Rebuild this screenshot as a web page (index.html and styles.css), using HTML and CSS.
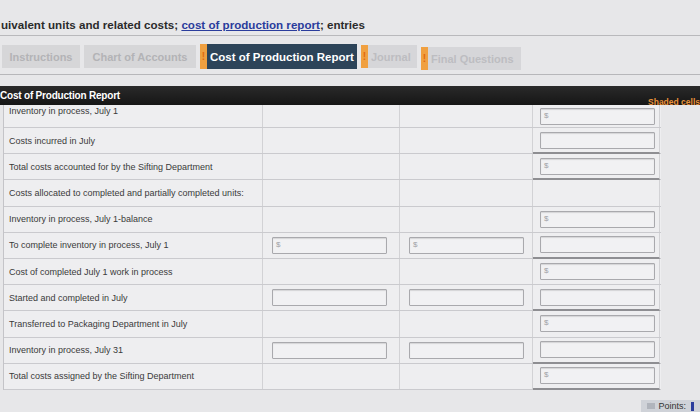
FILE: index.html
```html
<!DOCTYPE html>
<html>
<head>
<meta charset="utf-8">
<link rel="stylesheet" href="styles.css">
</head>
<body>
<div class="page">
  <div class="title">uivalent units and related costs; <a class="link">cost of production report</a>; entries</div>
  <div class="tabs">
    <div class="tab plain w-instr">Instructions</div>
    <div class="tab plain w-chart">Chart of Accounts</div>
    <div class="tab active w-cpr"><span class="flag">!</span><span class="lbl">Cost of Production Report</span></div>
    <div class="tab flagged w-jour"><span class="flag">!</span><span class="lbl">Journal</span></div>
    <div class="tab flagged w-final"><span class="flag">!</span><span class="lbl">Final Questions</span></div>
  </div>
  <div class="header">
    <span class="h-title">Cost of Production Report</span>
    <span class="h-note">Shaded cells</span>
  </div>
  <div class="table">
    <div class="row first">
      <div class="label">Inventory in process, July 1</div><div class="c"></div><div class="c"></div>
      <div class="c last"><div class="inp">$</div></div>
    </div>
    <div class="row">
      <div class="label">Costs incurred in July</div><div class="c"></div><div class="c"></div>
      <div class="c last total"><div class="inp"></div></div>
    </div>
    <div class="row">
      <div class="label">Total costs accounted for by the Sifting Department</div><div class="c"></div><div class="c"></div>
      <div class="c last total"><div class="inp">$</div></div>
    </div>
    <div class="row">
      <div class="label">Costs allocated to completed and partially completed units:</div><div class="c"></div><div class="c"></div>
      <div class="c last"></div>
    </div>
    <div class="row">
      <div class="label">Inventory in process, July 1-balance</div><div class="c"></div><div class="c"></div>
      <div class="c last"><div class="inp">$</div></div>
    </div>
    <div class="row">
      <div class="label">To complete inventory in process, July 1</div>
      <div class="c"><div class="inp">$</div></div><div class="c"><div class="inp">$</div></div>
      <div class="c last total"><div class="inp"></div></div>
    </div>
    <div class="row">
      <div class="label">Cost of completed July 1 work in process</div><div class="c"></div><div class="c"></div>
      <div class="c last"><div class="inp">$</div></div>
    </div>
    <div class="row">
      <div class="label">Started and completed in July</div>
      <div class="c"><div class="inp"></div></div><div class="c"><div class="inp"></div></div>
      <div class="c last total"><div class="inp"></div></div>
    </div>
    <div class="row">
      <div class="label">Transferred to Packaging Department in July</div><div class="c"></div><div class="c"></div>
      <div class="c last"><div class="inp">$</div></div>
    </div>
    <div class="row">
      <div class="label">Inventory in process, July 31</div>
      <div class="c"><div class="inp"></div></div><div class="c"><div class="inp"></div></div>
      <div class="c last total"><div class="inp"></div></div>
    </div>
    <div class="row">
      <div class="label">Total costs assigned by the Sifting Department</div><div class="c"></div><div class="c"></div>
      <div class="c last total"><div class="inp">$</div></div>
    </div>
  </div>
  <div class="footer"><span class="points"><span class="pico"></span>Points:<span class="pbar"></span></span></div>
</div>
</body>
</html>
```
FILE: styles.css
```css
html, body {
  margin: 0;
  padding: 0;
}
body {
  width: 700px;
  height: 412px;
  overflow: hidden;
  background: #e7e7e9;
  font-family: "Liberation Sans", Arial, sans-serif;
  color: #333;
}
.page {
  display: flex;
  flex-direction: column;
}
.title {
  padding: 18px 0 0 1px;
  height: 17px;
  font-size: 11.6px;
  font-weight: bold;
  color: #2b2b2b;
  white-space: nowrap;
  border-bottom: 1px solid #b9b9bc;
}
.link {
  color: #2a3c9c;
  text-decoration: underline;
}
.tabs {
  display: flex;
  gap: 4px;
  padding: 9px 0 0 2px;
  height: 29px;
  border-bottom: 1px solid #b7b7ba;
  box-sizing: content-box;
}
.tab {
  height: 23px;
  display: flex;
  align-items: center;
  font-size: 11px;
  font-weight: bold;
  white-space: nowrap;
}
.plain {
  background: #d6d6d8;
  color: #b3b3b6;
  justify-content: center;
}
.w-instr { width: 78px; }
.w-chart { width: 112px; }
.w-cpr { width: 157px; }
.w-jour { width: 56px; }
.w-final { width: 100px; margin-top: 2px; }
.flag {
  width: 7px;
  height: 100%;
  background: #f0a040;
  color: #e06a10;
  font-size: 10px;
  display: flex;
  align-items: center;
  justify-content: center;
  flex: none;
}
.lbl {
  flex: 1;
  height: 100%;
  display: flex;
  align-items: center;
  padding-left: 3px;
}
.active {
  height: 25px;
  margin-top: -1px;
}
.active .lbl {
  background: #2d4459;
  color: #ffffff;
  font-size: 11.5px;
}
.flagged .lbl {
  background: #d6d6d9;
  color: #bdbdc1;
}
.header {
  margin-top: 11px;
  height: 19px;
  background: linear-gradient(#2a2a2a, #161616);
  display: flex;
  justify-content: space-between;
  white-space: nowrap;
}
.h-title {
  color: #fff;
  font-size: 10px;
  font-weight: bold;
  padding-top: 4px;
  letter-spacing: -0.2px;
}
.h-note {
  color: #e8923a;
  font-size: 8.5px;
  font-weight: bold;
  align-self: flex-end;
  margin-bottom: -2px;
  margin-right: 0;
}
.table {
  margin-left: 3px;
  width: 657px;
  background: #eeeef0;
  border-left: 1px solid #c4c4c8;
}
.row {
  display: grid;
  grid-template-columns: 259px 137px 133px 127px;
  height: 26.2px;
  border-bottom: 1px solid #cacace;
  box-sizing: border-box;
}
.row.first {
  height: 23px;
}
.label {
  font-size: 9px;
  color: #3a3a3a;
  padding-left: 5px;
  display: flex;
  align-items: center;
  white-space: nowrap;
  border-right: 1px solid #d2d2d5;
}
.row.first .label {
  align-items: flex-start;
  padding-top: 1px;
}
.c {
  border-right: 1px solid #d2d2d5;
  display: flex;
  align-items: center;
  padding-left: 9px;
}
.c.last {
  padding-left: 7px;
}
.c.total {
  border-bottom: 2px solid #8e8e92;
  margin-bottom: -1px;
}
.inp {
  width: 115px;
  height: 17px;
  box-sizing: border-box;
  border: 1px solid #a9a9ad;
  border-radius: 1px;
  background: #f1f1f3;
  box-shadow: inset 0 1px 1px rgba(0,0,0,0.12);
  font-size: 8px;
  color: #a0a0a4;
  padding: 2px 0 0 3px;
}
.footer {
  display: flex;
  justify-content: flex-end;
  padding-top: 10px;
}
.points {
  display: flex;
  align-items: center;
  gap: 3px;
  background: #cfd2d8;
  height: 13px;
  padding-left: 6px;
  font-size: 9px;
  color: #333;
}
.pico {
  width: 8px;
  height: 6px;
  background: #b0b4bc;
}
.pbar {
  width: 3px;
  height: 9px;
  background: #2a3c9c;
  margin-left: 2px;
  margin-right: 6px;
}
```
